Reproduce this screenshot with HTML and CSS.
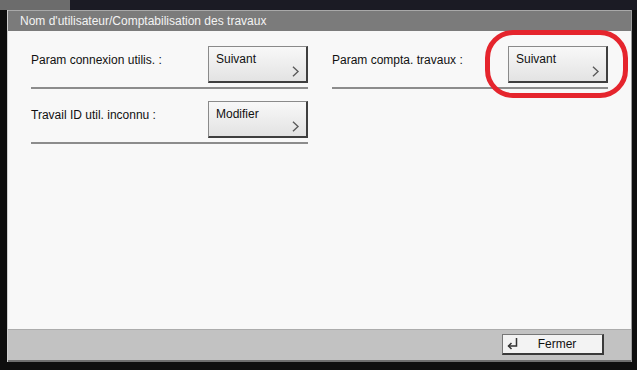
FILE: index.html
```html
<!DOCTYPE html>
<html lang="fr">
<head>
<meta charset="utf-8">
<title>Nom d'utilisateur/Comptabilisation des travaux</title>
<link rel="stylesheet" href="styles.css">
</head>
<body>
<div class="screen">
  <div class="topstrip"><div class="ts-left"></div><div class="ts-right"></div></div>
  <div class="panel">
    <div class="titlebar">Nom d'utilisateur/Comptabilisation des travaux</div>
    <div class="content">
      <div class="grid">
        <div class="item">
          <div class="row">
            <span class="label">Param connexion utilis. :</span>
            <button class="btn"><span class="btn-text">Suivant</span><svg class="chev" width="9" height="13" viewBox="0 0 9 13"><polyline points="1.5,0.8 7.5,6.5 1.5,12.2" fill="none" stroke="#5a5a5a" stroke-width="1.6"/></svg></button>
          </div>
          <div class="sep"></div>
        </div>
        <div class="item">
          <div class="row">
            <span class="label">Param compta. travaux :</span>
            <button class="btn"><span class="btn-text">Suivant</span><svg class="chev" width="9" height="13" viewBox="0 0 9 13"><polyline points="1.5,0.8 7.5,6.5 1.5,12.2" fill="none" stroke="#5a5a5a" stroke-width="1.6"/></svg></button>
          </div>
          <div class="sep"></div>
        </div>
        <div class="item">
          <div class="row">
            <span class="label">Travail ID util. inconnu :</span>
            <button class="btn"><span class="btn-text">Modifier</span><svg class="chev" width="9" height="13" viewBox="0 0 9 13"><polyline points="1.5,0.8 7.5,6.5 1.5,12.2" fill="none" stroke="#5a5a5a" stroke-width="1.6"/></svg></button>
          </div>
          <div class="sep"></div>
        </div>
      </div>
      <div class="highlight"></div>
    </div>
    <div class="footer">
      <button class="close">
        <svg class="ret" width="11" height="12" viewBox="0 0 11 12"><polyline points="9.5,0 9.5,8 1.5,8" fill="none" stroke="#333" stroke-width="1.5"/><polyline points="4.5,5 1.5,8 4.5,11" fill="none" stroke="#333" stroke-width="1.5"/></svg>
        <span class="close-text">Fermer</span>
      </button>
    </div>
  </div>
</div>
</body>
</html>
```

FILE: styles.css
```css
* { box-sizing: border-box; }
html, body { margin: 0; padding: 0; }
body {
  background: #0e0e0e;
  font-family: "Liberation Sans", Arial, sans-serif;
  font-size: 12px;
  color: #111;
}
.screen {
  width: 637px;
  height: 370px;
  display: flex;
  flex-direction: column;
}
.topstrip {
  display: flex;
  height: 10px;
}
.ts-left { width: 70px; background: #6c6c6c; }
.ts-right { flex: 1; background: #1b1b24; }
.panel {
  margin-left: 7px;
  width: 625px;
  height: 352px;
  display: flex;
  flex-direction: column;
  border-left: 1px solid #cfcfcf;
  border-right: 1px solid #9a9a9a;
}
.titlebar {
  height: 21px;
  background: #7b7b7b;
  border-top: 1px solid #a9a9a9;
  color: #f3f3f3;
  padding: 3px 0 0 12px;
  font-size: 12px;
  line-height: 15px;
}
.content {
  position: relative;
  flex: 1;
  background: #f8f8f8;
  padding: 15px 0 0 23px;
}
.grid {
  display: grid;
  grid-template-columns: 277px 276px;
  column-gap: 24px;
  row-gap: 12px;
}
.row {
  display: flex;
  align-items: flex-start;
}
.label {
  flex: 1;
  padding-top: 7px;
  line-height: 14px;
  white-space: nowrap;
}
.btn {
  width: 100px;
  height: 37px;
  display: flex;
  flex-direction: column;
  justify-content: space-between;
  padding: 5px 6px 4px 7px;
  background: linear-gradient(#f8f8f8, #e3e3e3);
  border-style: solid;
  border-width: 1px 2px 2px 1px;
  border-color: #8a8a8a #3f3f3f #3f3f3f #8a8a8a;
  font-family: inherit;
  font-size: 12px;
  color: #111;
  text-align: left;
}
.btn-text { line-height: 14px; }
.chev { align-self: flex-end; }
.sep {
  margin-top: 4px;
  height: 2px;
  background: #8c8c8c;
}
.highlight {
  position: absolute;
  left: 477px;
  top: -1px;
  width: 143px;
  height: 68px;
  border: 5px solid #e5252d;
  border-radius: 28px;
}
.footer {
  background: #c2c2c2;
  border-top: 1px solid #acacac;
  border-bottom: 2px solid #6e6e6e;
  display: flex;
  justify-content: flex-end;
  padding: 4px 27px 0 0;
  height: 33px;
}
.close {
  width: 102px;
  height: 21px;
  display: flex;
  align-items: center;
  padding: 0 0 0 4px;
  background: #f3f3f3;
  border-style: solid;
  border-width: 1px 2px 2px 1px;
  border-color: #777 #3a3a3a #3a3a3a #777;
  font-family: inherit;
  font-size: 12px;
  color: #111;
}
.ret { flex: none; }
.close-text {
  flex: 1;
  text-align: center;
  padding-right: 6px;
}
```
